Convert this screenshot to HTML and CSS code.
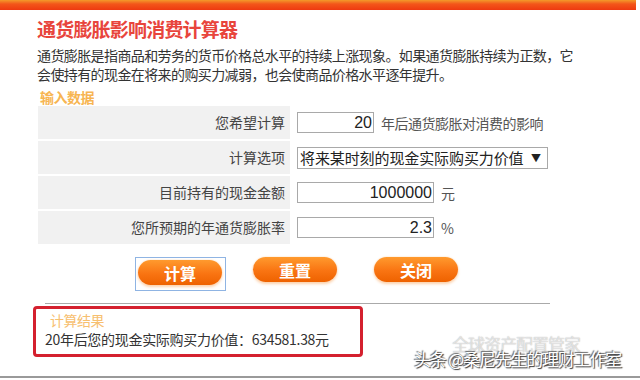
FILE: index.html
```html
<!DOCTYPE html>
<html lang="zh-CN">
<head>
  <meta charset="UTF-8">
  <meta name="viewport" content="width=device-width, initial-scale=1.0">
  <title>通货膨胀影响消费计算器</title>
  <link rel="stylesheet" href="styles.css">
</head>
<body>
  <div class="topbar"></div>

  <div class="main">
    <div class="title">通货膨胀影响消费计算器</div>
    <div class="desc">通货膨胀是指商品和劳务的货币价格总水平的持续上涨现象。如果通货膨胀持续为正数，它<br>会使持有的现金在将来的购买力减弱，也会使商品价格水平逐年提升。</div>

    <div class="section-title">输入数据</div>
    <div class="form">
      <div class="row">
        <div class="label">您希望计算</div>
        <div class="field">
          <input class="num short" type="text" value="20">
          <span class="unit">年后通货膨胀对消费的影响</span>
        </div>
      </div>
      <div class="row">
        <div class="label">计算选项</div>
        <div class="field">
          <div class="select">
            <span class="select-text">将来某时刻的现金实际购买力价值</span>
            <span class="select-arrow">▼</span>
          </div>
        </div>
      </div>
      <div class="row">
        <div class="label">目前持有的现金金额</div>
        <div class="field">
          <input class="num" type="text" value="1000000">
          <span class="unit">元</span>
        </div>
      </div>
      <div class="row">
        <div class="label">您所预期的年通货膨胀率</div>
        <div class="field">
          <input class="num" type="text" value="2.3">
          <span class="unit">%</span>
        </div>
      </div>
    </div>

    <div class="buttons">
      <div class="btn-focus"><button class="btn">计算</button></div>
      <button class="btn">重置</button>
      <button class="btn">关闭</button>
    </div>

    <div class="divider"></div>

    <div class="result">
      <div class="result-title">计算结果</div>
      <div class="result-text">20年后您的现金实际购买力价值：634581.38元</div>
    </div>
  </div>

  <div class="bottom-line"></div>

  <div class="watermark">
    <span class="wm-back">全球资产配置管家</span>
    <span class="wm-front">头条 @桑尼先生的理财工作室</span>
  </div>
</body>
</html>
```

FILE: styles.css
```css
body {
  margin: 0;
  padding: 0;
  width: 640px;
  height: 380px;
  overflow: hidden;
  background: #fff;
  font-family: "Noto Sans CJK SC", "Liberation Sans", sans-serif;
  color: #333;
  position: relative;
}
.topbar {
  width: 636px;
  height: 10px;
  background: linear-gradient(180deg, #f39a2a 0%, #f3561a 40%, #ee3a10 100%);
}
.main {
  padding-left: 37px;
}
.title {
  margin-top: 8px;
  font-size: 19px;
  line-height: 22px;
  font-weight: bold;
  color: #e8453c;
  letter-spacing: -0.8px;
}
.desc {
  margin-top: 6px;
  font-size: 14px;
  line-height: 19px;
  color: #333;
  letter-spacing: -0.6px;
}
.section-title {
  margin-top: 5px;
  font-size: 14px;
  line-height: 16px;
  font-weight: bold;
  color: #f7b552;
  padding-left: 3px;
  letter-spacing: -0.5px;
}
.form {
  margin-top: 0;
}
.row {
  display: flex;
  align-items: center;
  height: 35px;
}
.label {
  width: 252px;
  height: 34px;
  margin-left: 1px;
  border-bottom: 1px solid #fff;
  background: #f1f1f1;
  display: flex;
  align-items: center;
  justify-content: flex-end;
  padding-right: 5px;
  box-sizing: border-box;
  font-size: 14px;
  color: #444;
}
.field {
  display: flex;
  align-items: center;
  padding-left: 7px;
}
.num {
  width: 137px;
  height: 21px;
  box-sizing: border-box;
  border: 1px solid #a9a9a9;
  padding: 0 1px;
  text-align: right;
  font-family: "Liberation Sans", sans-serif;
  font-size: 16px;
  color: #222;
  margin: 0;
}
.num.short {
  width: 77px;
}
.unit {
  margin-left: 7px;
  font-size: 14px;
  color: #555;
  letter-spacing: -0.5px;
}
.select {
  width: 251px;
  height: 22px;
  box-sizing: border-box;
  border: 1px solid #a9a9a9;
  display: flex;
  align-items: center;
  padding: 0 6px 0 2px;
  font-size: 15px;
  color: #222;
  white-space: nowrap;
}
.select-text {
  flex: 1;
  letter-spacing: -0.1px;
}
.select-arrow {
  font-size: 10px;
  margin-left: 4px;
}
.buttons {
  display: flex;
  align-items: flex-start;
  margin-top: 12px;
  padding-left: 98px;
  height: 34px;
}
.btn-focus {
  width: 91px;
  height: 34px;
  box-sizing: border-box;
  border: 1px solid #8fb4e3;
  padding: 2px 0 0 2px;
  margin-right: 27px;
}
.btn {
  width: 84px;
  height: 25px;
  border: none;
  border-radius: 13px;
  background: linear-gradient(180deg, #ff9a2e 0%, #f97412 55%, #ee6200 100%);
  box-shadow: 0 2px 3px #fcd2ad, 0 0 2px #fcd9b8;
  color: #fff;
  font-family: "Noto Sans CJK SC", sans-serif;
  font-size: 16px;
  font-weight: bold;
  padding: 0;
  margin-right: 37px;
  cursor: pointer;
}
.btn-focus .btn {
  margin-right: 0;
}
.divider {
  margin-top: 12px;
  margin-left: 8px;
  width: 505px;
  height: 1px;
  background: #aaa;
}
.result {
  margin-top: 2px;
  margin-left: -4px;
  width: 330px;
  height: 51px;
  box-sizing: border-box;
  border: 3px solid #d4202e;
  border-radius: 4px;
  padding: 2px 0 0 9px;
}
.result-title {
  font-size: 14px;
  line-height: 18px;
  color: #f7c070;
  padding-left: 5px;
  letter-spacing: -0.5px;
}
.result-text {
  font-size: 14px;
  line-height: 20px;
  color: #333;
  letter-spacing: -0.3px;
}
.bottom-line {
  position: absolute;
  left: 0;
  top: 376px;
  width: 640px;
  height: 2px;
  background: #9a9a9a;
}
.watermark {
  position: absolute;
  left: 412px;
  top: 334px;
  width: 228px;
  height: 40px;
}
.wm-back {
  position: absolute;
  left: 40px;
  top: 0;
  font-size: 17px;
  line-height: 20px;
  color: rgba(255, 255, 255, 0.6);
  text-shadow: 0 0 1px rgba(0, 0, 0, 0.35);
  white-space: nowrap;
  letter-spacing: -1px;
}
.wm-front {
  position: absolute;
  left: 2px;
  top: 14px;
  font-size: 17px;
  line-height: 22px;
  color: #fff;
  text-shadow: 1px 1px 1px #333, -1px -1px 1px #666;
  white-space: nowrap;
  letter-spacing: -1.2px;
}
```
